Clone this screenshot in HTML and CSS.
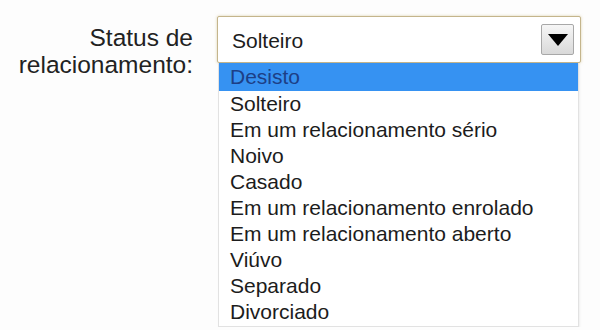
FILE: index.html
```html
<!DOCTYPE html>
<html lang="pt">
<head>
<meta charset="utf-8">
<link rel="stylesheet" href="styles.css">
</head>
<body>
<div class="wrap">
  <div class="label">Status de<br>relacionamento:</div>
  <div class="field">
    <div class="select">
      <span class="value">Solteiro</span>
      <span class="btn"><svg width="20" height="12" viewBox="0 0 20 12"><polygon points="0,0 20,0 10,12" fill="#000"/></svg></span>
    </div>
    <ul class="list">
      <li class="sel">Desisto</li>
      <li>Solteiro</li>
      <li>Em um relacionamento sério</li>
      <li>Noivo</li>
      <li>Casado</li>
      <li>Em um relacionamento enrolado</li>
      <li>Em um relacionamento aberto</li>
      <li>Viúvo</li>
      <li>Separado</li>
      <li>Divorciado</li>
    </ul>
  </div>
</div>
</body>
</html>
```

FILE: styles.css
```css
html, body {
  margin: 0;
  padding: 0;
  background: #fdfdfd;
}
body {
  font-family: "Liberation Sans", Arial, sans-serif;
  color: #1c1c1c;
}
.wrap {
  display: flex;
  align-items: flex-start;
  padding-top: 16px;
}
.label {
  width: 193px;
  text-align: right;
  font-size: 24.5px;
  line-height: 27px;
  padding-top: 8px;
  color: #222;
}
.field {
  margin-left: 24px;
  width: 364px;
}
.select {
  box-sizing: border-box;
  height: 47px;
  border: 1px solid #c4b58c;
  border-radius: 2px;
  background: #fff;
  box-shadow: 0 0 3px rgba(200, 180, 120, 0.6);
  display: flex;
  align-items: center;
  justify-content: space-between;
  padding: 0 6px 0 14px;
}
.value {
  font-size: 21px;
  color: #1c1c1c;
  padding-top: 2px;
}
.btn {
  box-sizing: border-box;
  width: 33px;
  height: 31px;
  border: 1px solid #a8a8a8;
  border-radius: 2px;
  background: linear-gradient(#f6f6f6, #d9d9d9);
  display: flex;
  align-items: center;
  justify-content: center;
  padding-top: 1px;
}
.list {
  list-style: none;
  margin: 0 2px 0 1px;
  padding: 0 0 1px 0;
  border: 1px solid #e2e2e2;
  border-top: none;
  background: #fff;
  box-shadow: 1px 1px 2px rgba(0, 0, 0, 0.06);
}
.list li {
  font-size: 21px;
  line-height: 26px;
  height: 26px;
  padding-left: 11px;
  color: #1c1c1c;
  white-space: nowrap;
}
.list li.sel {
  background: #3692f2;
  color: #1d3f86;
  height: 28px;
  line-height: 28px;
  padding-top: 0;
}
```
